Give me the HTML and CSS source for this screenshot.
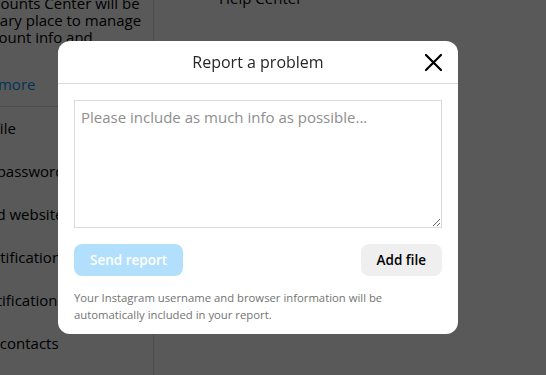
FILE: index.html
```html
<!DOCTYPE html>
<html lang="en">

<head>
    <meta charset="UTF-8">
    <meta name="viewport" content="width=device-width, initial-scale=1.0">
    <title>Report a problem</title>
    <link rel="stylesheet" href="styles.css">
</head>

<body>
    <div class="page">
        <div class="sidebar">
            <div class="sidebar-inner">
                <p class="intro">Your Accounts Center will be<br>the primary place to manage<br>your account info and</p>
                <a class="more" href="#">See more</a>
                <ul class="menu">
                    <li>Edit profile</li>
                    <li>Change password</li>
                    <li>Apps and websites</li>
                    <li>Email notifications</li>
                    <li>Push notifications</li>
                    <li>Manage contacts</li>
                </ul>
            </div>
        </div>
        <div class="content">
            <p class="help">Help Center</p>
        </div>
    </div>

    <div class="overlay">
        <div class="modal">
            <div class="modal-header">
                <h2>Report a problem</h2>
                <button class="close" aria-label="Close">
                    <svg width="19" height="19" viewBox="0 0 19 19">
                        <path d="M2 2 L17 17 M17 2 L2 17" stroke="#000" stroke-width="2.2" stroke-linecap="round" fill="none" />
                    </svg>
                </button>
            </div>
            <div class="modal-body">
                <textarea placeholder="Please include as much info as possible..."></textarea>
                <div class="actions">
                    <button class="send" disabled>Send report</button>
                    <button class="add">Add file</button>
                </div>
                <p class="note">Your Instagram username and browser information will be automatically included in your report.</p>
            </div>
        </div>
    </div>
</body>

</html>
```

FILE: styles.css
```css
body {
    margin: 0;
    font-family: "Open Sans", "Noto Sans", sans-serif;
    color: #000;
    background: #fff;
    overflow: hidden;
}

.page {
    display: flex;
    height: 375px;
}

.sidebar {
    width: 153px;
    border-right: 1px solid #dbdbdb;
    overflow: hidden;
    flex-shrink: 0;
}

.sidebar-inner {
    width: 260px;
    margin-left: -60px;
    margin-top: -5px;
}

.intro {
    margin: 0;
    font-size: 15px;
    line-height: 17px;
    white-space: nowrap;
}

.more {
    display: block;
    padding: 27px 0 11px 29px;
    color: #0095f6;
    text-decoration: none;
    font-size: 15px;
    line-height: 22px;
    border-bottom: 1px solid #dbdbdb;
}

.menu {
    list-style: none;
    margin: 0;
    padding: 0;
}

.menu li {
    height: 43px;
    line-height: 43px;
    font-size: 15px;
}

.content {
    flex: 1;
}

.help {
    margin: -12px 0 0 65px;
    font-size: 15px;
}

.overlay {
    position: fixed;
    inset: 0;
    background: rgba(0, 0, 0, 0.65);
    display: flex;
    align-items: center;
    justify-content: center;
    padding-right: 30px;
}

.modal {
    width: 400px;
    background: #fff;
    border-radius: 12px;
    overflow: hidden;
}

.modal-header {
    height: 42px;
    border-bottom: 1px solid #dbdbdb;
    display: flex;
    align-items: center;
    justify-content: center;
    position: relative;
}

.modal-header h2 {
    margin: 0;
    font-size: 16px;
    font-weight: 500;
    color: #262626;
}

.close {
    position: absolute;
    right: 15px;
    top: 12px;
    background: none;
    border: none;
    padding: 0;
    width: 19px;
    height: 19px;
    cursor: pointer;
}

.modal-body {
    padding: 16px 16px 11px;
}

textarea {
    display: block;
    box-sizing: border-box;
    width: 100%;
    height: 128px;
    border: 1px solid #dbdbdb;
    padding: 6px;
    font-family: inherit;
    font-size: 15px;
    resize: vertical;
    margin: 0;
}

textarea::placeholder {
    color: #8e8e8e;
}

.actions {
    display: flex;
    justify-content: space-between;
    margin-top: 16px;
}

.actions button {
    height: 32px;
    border: none;
    border-radius: 8px;
    font-family: inherit;
    font-size: 13.5px;
    font-weight: 600;
    padding: 0 16px;
}

.send {
    background: #b2dffc;
    color: #fff;
}

.add {
    background: #efefef;
    color: #000;
    cursor: pointer;
}

.note {
    margin: 13px 0 0;
    font-size: 11.3px;
    line-height: 17px;
    color: #737373;
}
```
